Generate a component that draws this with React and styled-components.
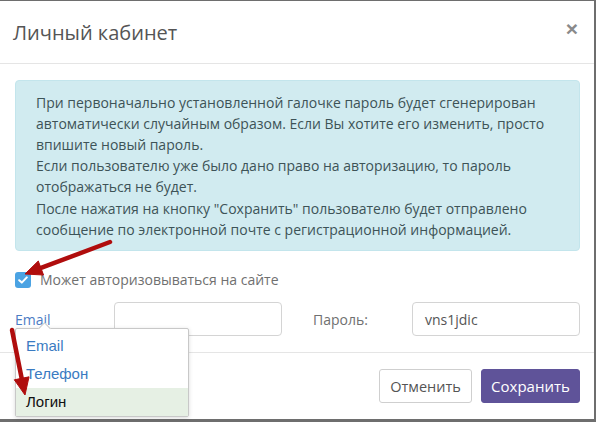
import React from 'react'
import styled, { createGlobalStyle } from 'styled-components'

const Global = createGlobalStyle`
  html, body {
    margin: 0;
    padding: 0;
    background: #6e6e6e;
    font-family: "Open Sans", "Noto Sans", sans-serif;
  }
`

const Page = styled.div`
  width: 596px;
  height: 422px;
  padding-top: 1px;
  box-sizing: border-box;
  overflow: hidden;
`

const Modal = styled.div`
  position: relative;
  width: 594px;
  height: 418px;
  background: #fff;
  display: flex;
  flex-direction: column;
`

const Header = styled.div`
  height: 62px;
  display: flex;
  align-items: center;
  justify-content: space-between;
  padding: 0 15px 0 13px;
  border-bottom: 1px solid #e5e5e5;
`

const Title = styled.h4`
  margin: 0;
  font-size: 20px;
  font-weight: 400;
  color: #555;
  margin-top: 1px;
`

const Close = styled.span`
  font-family: "Liberation Sans", Arial, sans-serif;
  font-size: 21px;
  font-weight: 700;
  color: #8a8a8a;
  line-height: 1;
  margin-top: -6px;
  margin-right: 1px;
`

const Body = styled.div`
  padding: 16px 14px 16px 15px;
  border-bottom: 1px solid #e5e5e5;
`

const Info = styled.div`
  background: #d1ebf0;
  border: 1px solid #c3e5ec;
  border-radius: 4px;
  padding: 11px 20px 10px 20px;
  font-size: 14px;
  line-height: 21.2px;
  color: #3d5357;
  white-space: nowrap;
`

const CheckRow = styled.label`
  display: flex;
  align-items: center;
  gap: 9px;
  margin-top: 19px;
  font-size: 14px;
  color: #707070;
`

const CheckBox = styled.span`
  width: 16px;
  height: 16px;
  border-radius: 3px;
  background: #4ba3e3;
  display: flex;
  align-items: center;
  justify-content: center;
`

const FormRow = styled.div`
  display: grid;
  grid-template-columns: 99px 168px 31px 99px 168px;
  align-items: center;
  margin-top: 13px;
`

const Label = styled.span`
  font-size: 14px;
  color: #707070;
`

const SwitchLabel = styled.span`
  position: relative;
  font-size: 14px;
  color: #4c7cc4;
`

const Input = styled.div`
  height: 34px;
  box-sizing: border-box;
  border: 1px solid #d4d4d4;
  border-radius: 4px;
  padding: 0 12px;
  display: flex;
  align-items: center;
  font-size: 14px;
  color: #555;
`

const Menu = styled.ul`
  position: absolute;
  left: 0;
  top: 18px;
  width: 174px;
  margin: 0;
  padding: 3px 0 0 0;
  list-style: none;
  background: #fff;
  border: 1px solid #c8c8c8;
  border-radius: 2px;
  box-shadow: 0 1px 4px rgba(0, 0, 0, 0.15);
  box-sizing: border-box;
  z-index: 5;
  font-family: "Liberation Sans", Arial, sans-serif;

  &::before {
    content: '';
    position: absolute;
    top: -5px;
    left: 24px;
    width: 8px;
    height: 8px;
    background: #fff;
    border-left: 1px solid #c8c8c8;
    border-top: 1px solid #c8c8c8;
    transform: rotate(45deg);
  }
`

const MenuItem = styled.li`
  height: 28px;
  display: flex;
  align-items: center;
  padding-left: 10px;
  font-size: 15px;
  color: ${p => (p.$active ? '#111' : '#3a7bc2')};
  background: ${p => (p.$active ? '#e6f0e4' : 'transparent')};
`

const Footer = styled.div`
  display: flex;
  justify-content: flex-end;
  gap: 9px;
  padding: 16px 14px 16px 15px;
`

const Button = styled.button`
  height: 34px;
  width: ${p => (p.$primary ? '99px' : '93px')};
  padding: 0;
  border-radius: 3px;
  font-family: "Open Sans", sans-serif;
  font-size: ${p => (p.$primary ? '15px' : '14.5px')};
  border: 1px solid ${p => (p.$primary ? '#5f5399' : '#cfcfcf')};
  background: ${p => (p.$primary ? '#5f5399' : '#fff')};
  color: ${p => (p.$primary ? '#fff' : '#555')};
`

const Arrows = styled.svg`
  position: absolute;
  left: 0;
  top: -1px;
  pointer-events: none;
  z-index: 10;
`

const Arrow = ({ x1, y1, x2, y2 }) => {
  const dx = x2 - x1
  const dy = y2 - y1
  const len = Math.hypot(dx, dy)
  const ux = dx / len
  const uy = dy / len
  const head = 17
  const half = 7.5
  const bx = x2 - ux * head
  const by = y2 - uy * head
  const pts = [
    `${x2},${y2}`,
    `${bx - uy * half},${by + ux * half}`,
    `${bx + uy * half},${by - ux * half}`,
  ].join(' ')
  return (
    <g fill="#b00d0d" stroke="#b00d0d">
      <line x1={x1} y1={y1} x2={bx + ux * 2} y2={by + uy * 2} strokeWidth="4.5" strokeLinecap="round" />
      <polygon points={pts} strokeWidth="1" strokeLinejoin="round" />
    </g>
  )
}

export default function App() {
  return (
    <Page>
      <Global />
      <Modal>
        <Header>
          <Title>Личный кабинет</Title>
          <Close>×</Close>
        </Header>
        <Body>
          <Info>
            При первоначально установленной галочке пароль будет сгенерирован<br />
            автоматически случайным образом. Если Вы хотите его изменить, просто<br />
            впишите новый пароль.<br />
            Если пользователю уже было дано право на авторизацию, то пароль<br />
            отображаться не будет.<br />
            После нажатия на кнопку "Сохранить" пользователю будет отправлено<br />
            сообщение по электронной почте с регистрационной информацией.
          </Info>
          <CheckRow>
            <CheckBox>
              <svg width="10" height="8" viewBox="0 0 10 8">
                <path d="M1.2 4.2 L3.8 6.6 L8.8 1.4" fill="none" stroke="#fff" strokeWidth="2" strokeLinecap="round" strokeLinejoin="round" />
              </svg>
            </CheckBox>
            Может авторизовываться на сайте
          </CheckRow>
          <FormRow>
            <SwitchLabel>
              Email
              <Menu>
                <MenuItem>Email</MenuItem>
                <MenuItem>Телефон</MenuItem>
                <MenuItem $active>Логин</MenuItem>
              </Menu>
            </SwitchLabel>
            <Input />
            <span />
            <Label>Пароль:</Label>
            <Input>vns1jdic</Input>
          </FormRow>
        </Body>
        <Footer>
          <Button>Отменить</Button>
          <Button $primary>Сохранить</Button>
        </Footer>
        <Arrows width="596" height="422">
          <Arrow x1={110} y1={242} x2={25} y2={274} />
          <Arrow x1={12} y1={330} x2={25} y2={395} />
        </Arrows>
      </Modal>
    </Page>
  )
}
